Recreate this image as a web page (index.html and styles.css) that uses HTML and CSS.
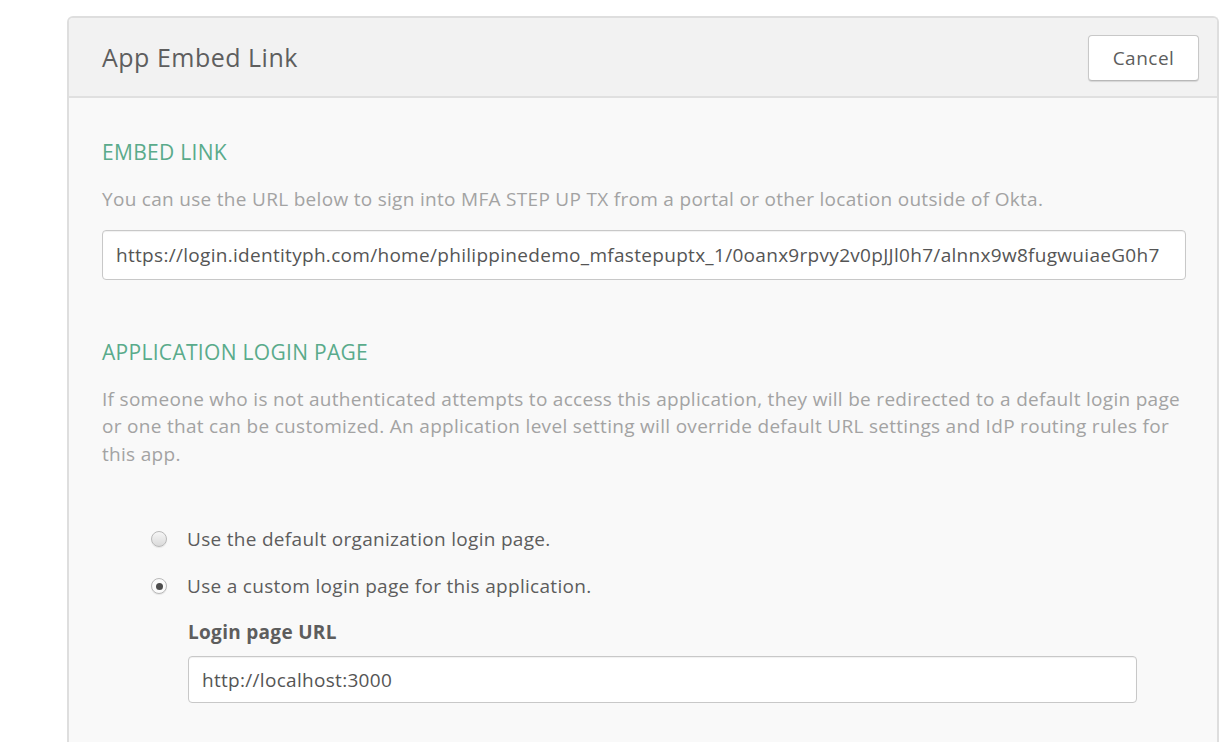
FILE: index.html
```html
<!DOCTYPE html>
<html>
<head>
<meta charset="utf-8">
<link rel="stylesheet" href="styles.css">
</head>
<body>
<div class="panel">
  <div class="panel-header">
    <h1 class="title">App Embed Link</h1>
    <button class="btn">Cancel</button>
  </div>
  <div class="panel-body">
    <h2 class="section-title">EMBED LINK</h2>
    <p class="desc">You can use the URL below to sign into MFA STEP UP TX from a portal or other location outside of Okta.</p>
    <div class="input wide">https://login.identityph.com/home/philippinedemo_mfastepuptx_1/0oanx9rpvy2v0pJJl0h7/alnnx9w8fugwuiaeG0h7</div>

    <h2 class="section-title second">APPLICATION LOGIN PAGE</h2>
    <p class="desc">If someone who is not authenticated attempts to access this application, they will be redirected to a default login page or one that can be customized. An application level setting will override default URL settings and IdP routing rules for this app.</p>

    <div class="options">
      <label class="option"><span class="radio"></span><span>Use the default organization login page.</span></label>
      <label class="option"><span class="radio checked"></span><span>Use a custom login page for this application.</span></label>
      <div class="sub">
        <div class="field-label">Login page URL</div>
        <div class="input narrow">http://localhost:3000</div>
      </div>
    </div>
  </div>
</div>
</body>
</html>
```

FILE: styles.css
```css
html, body {
  margin: 0;
  padding: 0;
  background: #ffffff;
  font-family: "Open Sans", "Liberation Sans", sans-serif;
  color: #5d5d5d;
}
.panel {
  margin: 16px 0 0 67px;
  width: 1148px;
  border: 2px solid #dedede;
  border-bottom: none;
  border-radius: 6px 6px 0 0;
  background: #f9f9f9;
  height: 740px;
  overflow: hidden;
}
.panel-header {
  height: 78px;
  background: #f2f2f2;
  border-bottom: 2px solid #e0e0e0;
  display: flex;
  align-items: center;
  justify-content: space-between;
  padding: 0 18px 0 33px;
}
.title {
  margin: 0;
  font-size: 25px;
  letter-spacing: 0.5px;
  font-weight: 400;
  color: #5e5e5e;
}
.btn {
  width: 111px;
  height: 46px;
  background: #ffffff;
  border: 1px solid #c8c8c8;
  border-bottom-color: #b8b8b8;
  border-radius: 4px;
  box-shadow: 0 1px 1px rgba(0,0,0,0.12);
  font-family: inherit;
  font-size: 19px;
  letter-spacing: 0.5px;
  color: #5d5d5d;
  margin-top: 2px;
}
.panel-body {
  padding: 40px 32px 0 33px;
}
.section-title {
  margin: 0;
  font-size: 21px;
  letter-spacing: 0.3px;
  font-weight: 400;
  color: #5aab8b;
  line-height: 28px;
}
.section-title.second {
  margin-top: 58px;
}
.desc {
  margin: 20px 0 0;
  font-size: 19px;
  letter-spacing: 0.3px;
  line-height: 27.5px;
  color: #a3a3a3;
}
.input {
  background: #ffffff;
  border: 1px solid #c8c8c8;
  border-radius: 4px;
  box-shadow: inset 0 1px 1px rgba(0,0,0,0.06);
  font-size: 19px;
  letter-spacing: 0.3px;
  color: #555555;
  display: flex;
  align-items: center;
  box-sizing: border-box;
}
.input.wide {
  margin-top: 16px;
  height: 50px;
  width: 1084px;
  padding-left: 13px;
}
.input.narrow {
  margin-top: 11px;
  height: 47px;
  width: 949px;
  padding-left: 13px;
}
.options {
  padding: 57px 0 0 49px;
}
.option {
  display: flex;
  align-items: center;
  gap: 20px;
  font-size: 19px;
  letter-spacing: 0.3px;
  color: #5d5d5d;
  height: 28px;
  margin-bottom: 19px;
}
.radio {
  width: 16px;
  height: 16px;
  border-radius: 50%;
  border: 1px solid #b9b9b9;
  background: linear-gradient(#f6f6f6, #dadada);
  box-shadow: 0 1px 1px rgba(0,0,0,0.08);
  box-sizing: border-box;
  display: flex;
  align-items: center;
  justify-content: center;
  flex-shrink: 0;
}
.radio.checked {
  background: #fbfbfb;
}
.radio.checked::after {
  content: "";
  width: 7px;
  height: 7px;
  border-radius: 50%;
  background: #4d4d4d;
}
.sub {
  padding-left: 37px;
  margin-top: 1px;
}
.field-label {
  font-size: 19px;
  letter-spacing: 0.3px;
  line-height: 26px;
  font-weight: 700;
  color: #5d5d5d;
}
```
